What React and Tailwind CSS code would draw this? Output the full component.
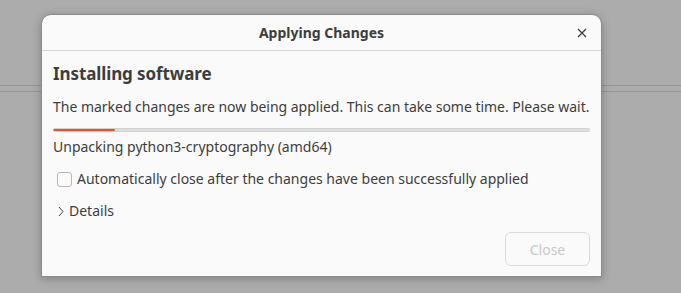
import React from "react";

export default function App() {
  return (
    <div
      className="relative w-[681px] h-[293px] bg-[#acacac] overflow-hidden"
      style={{ fontFamily: '"Noto Sans", "Open Sans", sans-serif' }}
    >
      {/* parent window behind */}
      <div className="flex flex-col pt-[85px]">
        <div className="h-[7px] border-y border-[#979797]" />
      </div>

      {/* dialog */}
      <div className="absolute left-[41px] top-[14px] w-[561px] h-[263px] bg-[#fafafa] rounded-t-[10px] border border-[#8a8a8a] shadow-[0_2px_10px_rgba(0,0,0,0.25)] flex flex-col text-[#3d3d3d]">
        <div className="relative h-[36px] flex items-center justify-center border-b border-[#d6d6d6] shrink-0">
          <span className="text-[14px] font-bold text-[#3d3d3d]">Applying Changes</span>
          <button className="absolute right-[12px] top-[11px] w-[14px] h-[14px] flex items-center justify-center">
            <svg width="10" height="10" viewBox="0 0 10 10">
              <path d="M1 1L9 9M9 1L1 9" stroke="#3d3d3d" strokeWidth="1.3" />
            </svg>
          </button>
        </div>
        <div className="flex flex-col px-[11px] flex-1">
          <div className="mt-[11px] text-[17px] leading-[24px] font-bold tracking-[-0.1px]">Installing software</div>
          <div className="mt-[11px] text-[14px] leading-[20px] whitespace-nowrap tracking-[-0.02px]">
            The marked changes are now being applied. This can take some time. Please wait.
          </div>
          <div className="mt-[11px] h-[4px] rounded-full bg-[#dedede] border-y border-[#d2d2d2] overflow-hidden flex">
            <div className="w-[62px] h-full bg-[#e95420] rounded-full" />
          </div>
          <div className="mt-[5px] text-[14px] leading-[20px]">Unpacking python3-cryptography (amd64)</div>
          <label className="mt-[12px] flex items-center gap-[5px] pl-[4px] text-[14px] leading-[20px]">
            <span className="w-[15px] h-[15px] rounded-[3px] border border-[#b8b8b8] bg-[#fafafa]" />
            <span>Automatically close after the changes have been successfully applied</span>
          </label>
          <div className="mt-[12px] flex items-center gap-[5px] pl-[5px] text-[14px] leading-[20px]">
            <svg width="6" height="11" viewBox="0 0 6 11">
              <path d="M1 1L5 5.5L1 10" stroke="#3d3d3d" strokeWidth="1" fill="none" />
            </svg>
            <span>Details</span>
          </div>
          <div className="mt-auto mb-[10px] flex justify-end">
            <button className="w-[85px] h-[34px] rounded-[6px] border border-[#dcdcdc] bg-[#fafafa] text-[14px] text-[#c8c8c8]">
              Close
            </button>
          </div>
        </div>
      </div>
    </div>
  );
}
